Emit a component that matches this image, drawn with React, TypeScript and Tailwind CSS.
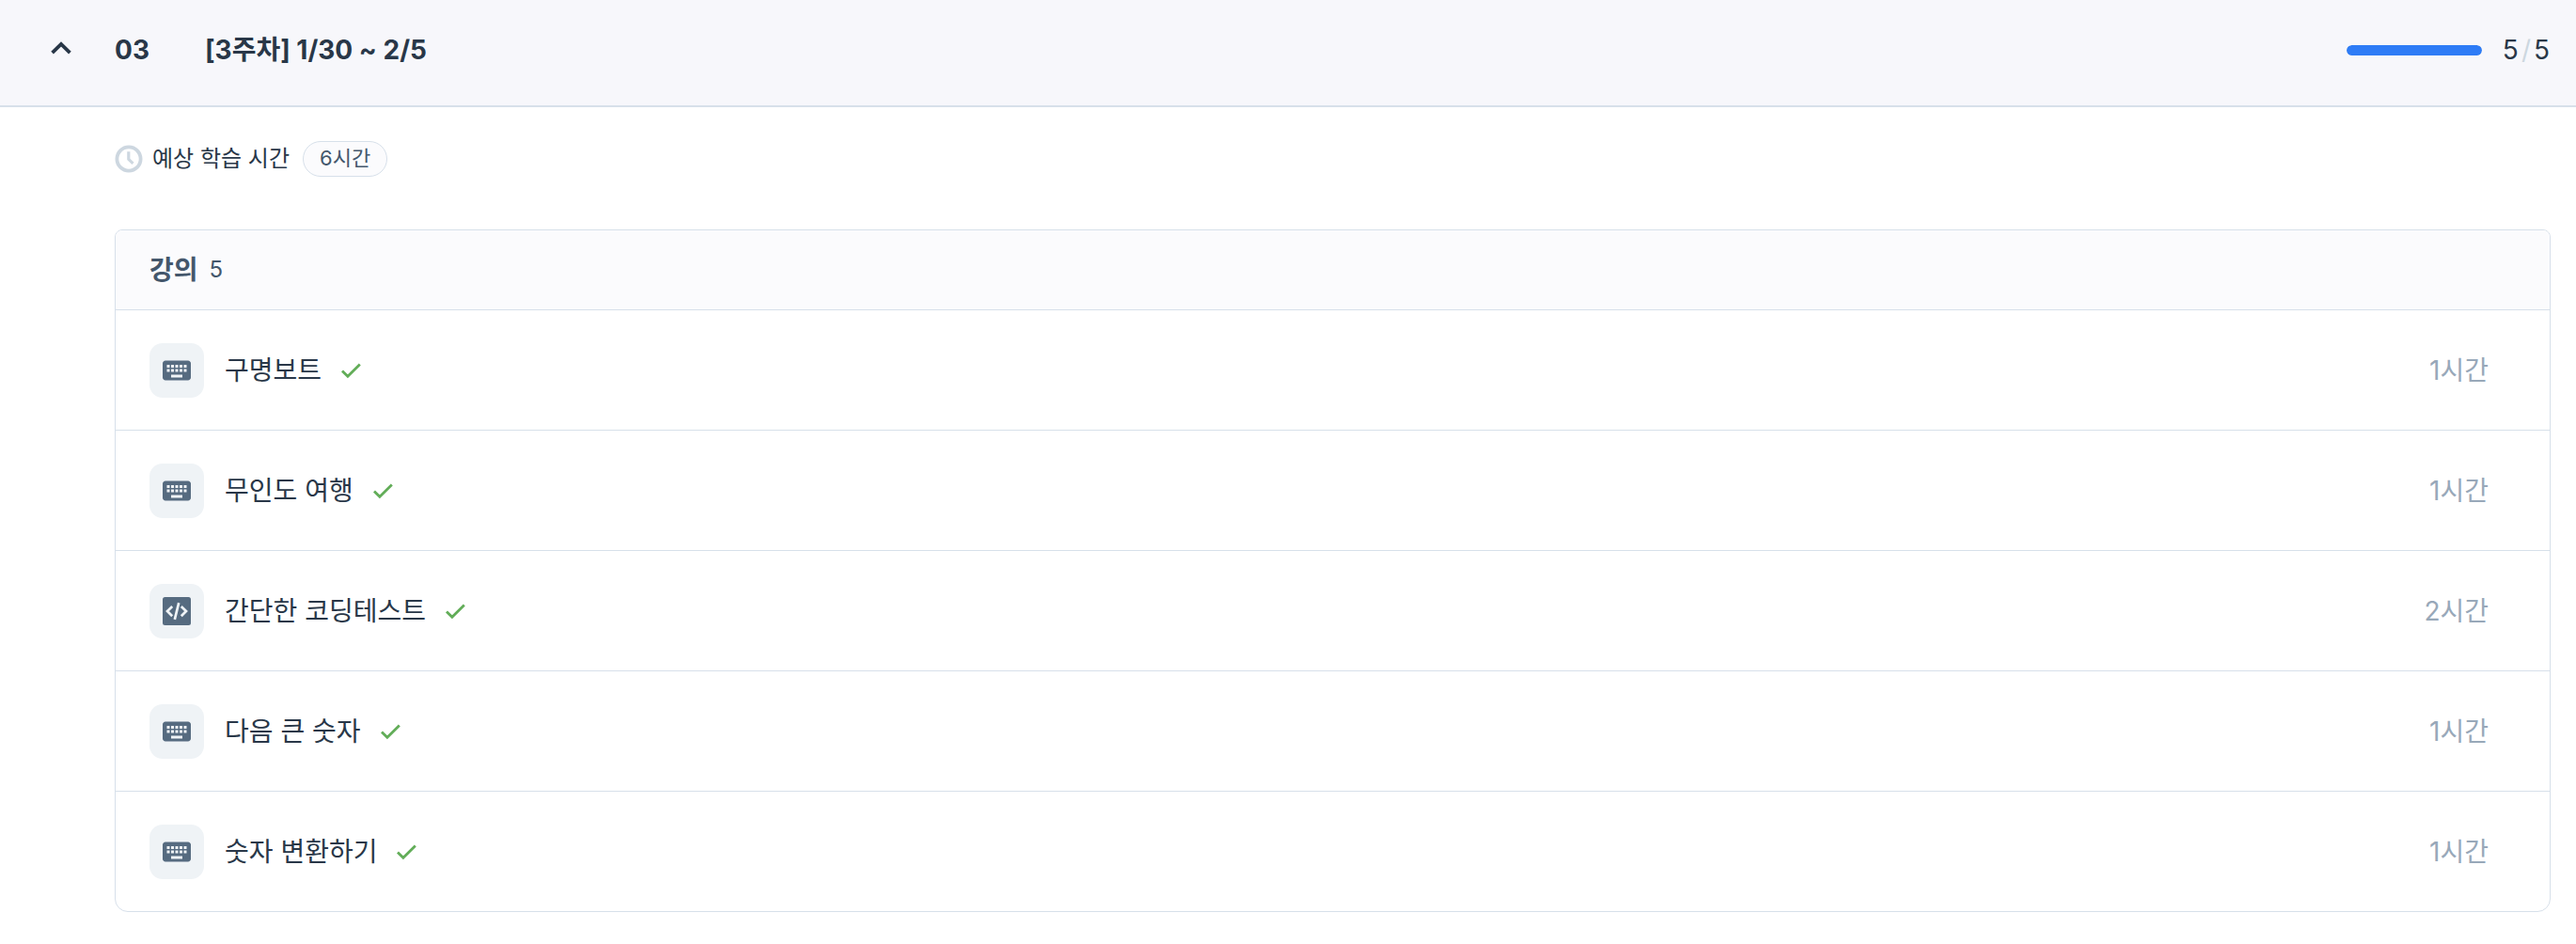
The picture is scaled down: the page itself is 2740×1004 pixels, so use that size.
import React, { useState } from 'react';
import { MdKeyboard } from 'react-icons/md';

type Lecture = {
  id: number;
  title: string;
  hours: number;
  type: 'keyboard' | 'code';
};

const lectures: Lecture[] = [
  { id: 1, title: '구명보트', hours: 1, type: 'keyboard' },
  { id: 2, title: '무인도 여행', hours: 1, type: 'keyboard' },
  { id: 3, title: '간단한 코딩테스트', hours: 2, type: 'code' },
  { id: 4, title: '다음 큰 숫자', hours: 1, type: 'keyboard' },
  { id: 5, title: '숫자 변환하기', hours: 1, type: 'keyboard' },
];

function ChevronIcon({ open }: { open: boolean }) {
  return (
    <svg
      width="22"
      height="18"
      viewBox="0 0 22 18"
      fill="none"
      aria-hidden="true"
      className={open ? '' : 'rotate-180'}
    >
      <path d="M1.6 12.2 L11 3 L20.4 12.2" stroke="currentColor" strokeWidth="3.8" />
    </svg>
  );
}

function ClockIcon() {
  return (
    <svg width="30" height="30" viewBox="0 0 30 30" fill="none" aria-hidden="true">
      <circle cx="15" cy="15" r="12.6" stroke="currentColor" strokeWidth="3.8" />
      <path d="M14.8 7.3 V15.4 L19.5 19.8" stroke="currentColor" strokeWidth="3.2" />
    </svg>
  );
}

function CodeIcon() {
  return (
    <svg width="30" height="30" viewBox="0 0 30 30" fill="none" aria-hidden="true">
      <rect width="30" height="30" rx="2.5" fill="currentColor" />
      <path
        d="M10.2 10 L5 15 L10.2 20.2 M19.8 10 L25 15 L19.8 20.2 M17.2 6.2 L12.8 23.8"
        stroke="#eff3f6"
        strokeWidth="2.7"
      />
    </svg>
  );
}

function CheckIcon() {
  return (
    <svg width="28" height="28" viewBox="0 0 28 28" fill="none" aria-hidden="true">
      <path d="M5 14.4 L10.9 20.3 L23.8 7.6" stroke="currentColor" strokeWidth="2.8" />
    </svg>
  );
}

export default function App() {
  const [open, setOpen] = useState(true);
  const total = lectures.length;
  const done = lectures.length;
  const totalHours = lectures.reduce((sum, item) => sum + item.hours, 0);

  return (
    <div className="bg-white text-[#293748] font-['Inter','Noto_Sans_CJK_KR',sans-serif]">
      {/* Week header */}
      <button
        type="button"
        aria-expanded={open}
        onClick={() => setOpen(!open)}
        className="w-full h-[114px] flex items-center pl-[54px] pr-7 pb-[6px] bg-[#f7f7fb] border-b-2 border-[#d7e0ea] text-[28px] leading-10 text-left"
      >
        <ChevronIcon open={open} />
        <span className="w-24 ml-[46px] font-bold">03</span>
        <span className="font-bold">[3주차] 1/30 ~ 2/5</span>
        <span className="ml-auto w-36 h-[11px] rounded-full bg-[#d7e0ea] overflow-hidden">
          <span
            className="block h-full rounded-full bg-[#2e7cf6]"
            style={{ width: `${(done / total) * 100}%` }}
          />
        </span>
        <span className="ml-[22px] flex gap-[3px]">
          <span>{done}</span>
          <span className="text-[#cdd7e0]">/</span>
          <span>{total}</span>
        </span>
      </button>

      {open && (
        <div className="pl-[122px] pr-[27px] pt-9 pb-8">
          <div className="flex items-center text-2xl">
            <span className="text-[#cdd7e0]">
              <ClockIcon />
            </span>
            <span className="ml-[10px]">예상 학습 시간</span>
            <span className="ml-[14px] h-[38px] px-[17px] flex items-center rounded-full border border-[#d7e0ea] bg-[#fbfbfd] text-[22px] text-[#44576c]">
              {totalHours}시간
            </span>
          </div>

          {/* Lecture list */}
          <section className="mt-14 border border-[#d7e0ea] rounded-t-lg rounded-b-[14px] overflow-hidden">
            <div className="h-[84px] px-9 flex items-center bg-[#fbfbfd] text-[#44576c]">
              <h2 className="text-[28px] leading-10 font-bold">강의</h2>
              <span className="ml-3 text-2xl">{total}</span>
            </div>
            <ul>
              {lectures.map((lecture) => (
                <li key={lecture.id} className="border-t border-[#d7e0ea]">
                  <a
                    href={`#lecture-${lecture.id}`}
                    className="h-[127px] pl-9 pr-[65px] flex items-center text-[28px] leading-10"
                  >
                    <span className="w-[58px] h-[58px] flex items-center justify-center rounded-[14px] bg-[#eff3f6] text-[#566b80]">
                      {lecture.type === 'code' ? <CodeIcon /> : <MdKeyboard size={36} />}
                    </span>
                    <span className="ml-[22px] mr-[17px]">{lecture.title}</span>
                    <span className="text-[#62ad58]">
                      <CheckIcon />
                    </span>
                    <span className="ml-auto text-[#98a8b9]">{lecture.hours}시간</span>
                  </a>
                </li>
              ))}
            </ul>
          </section>
        </div>
      )}
    </div>
  );
}
